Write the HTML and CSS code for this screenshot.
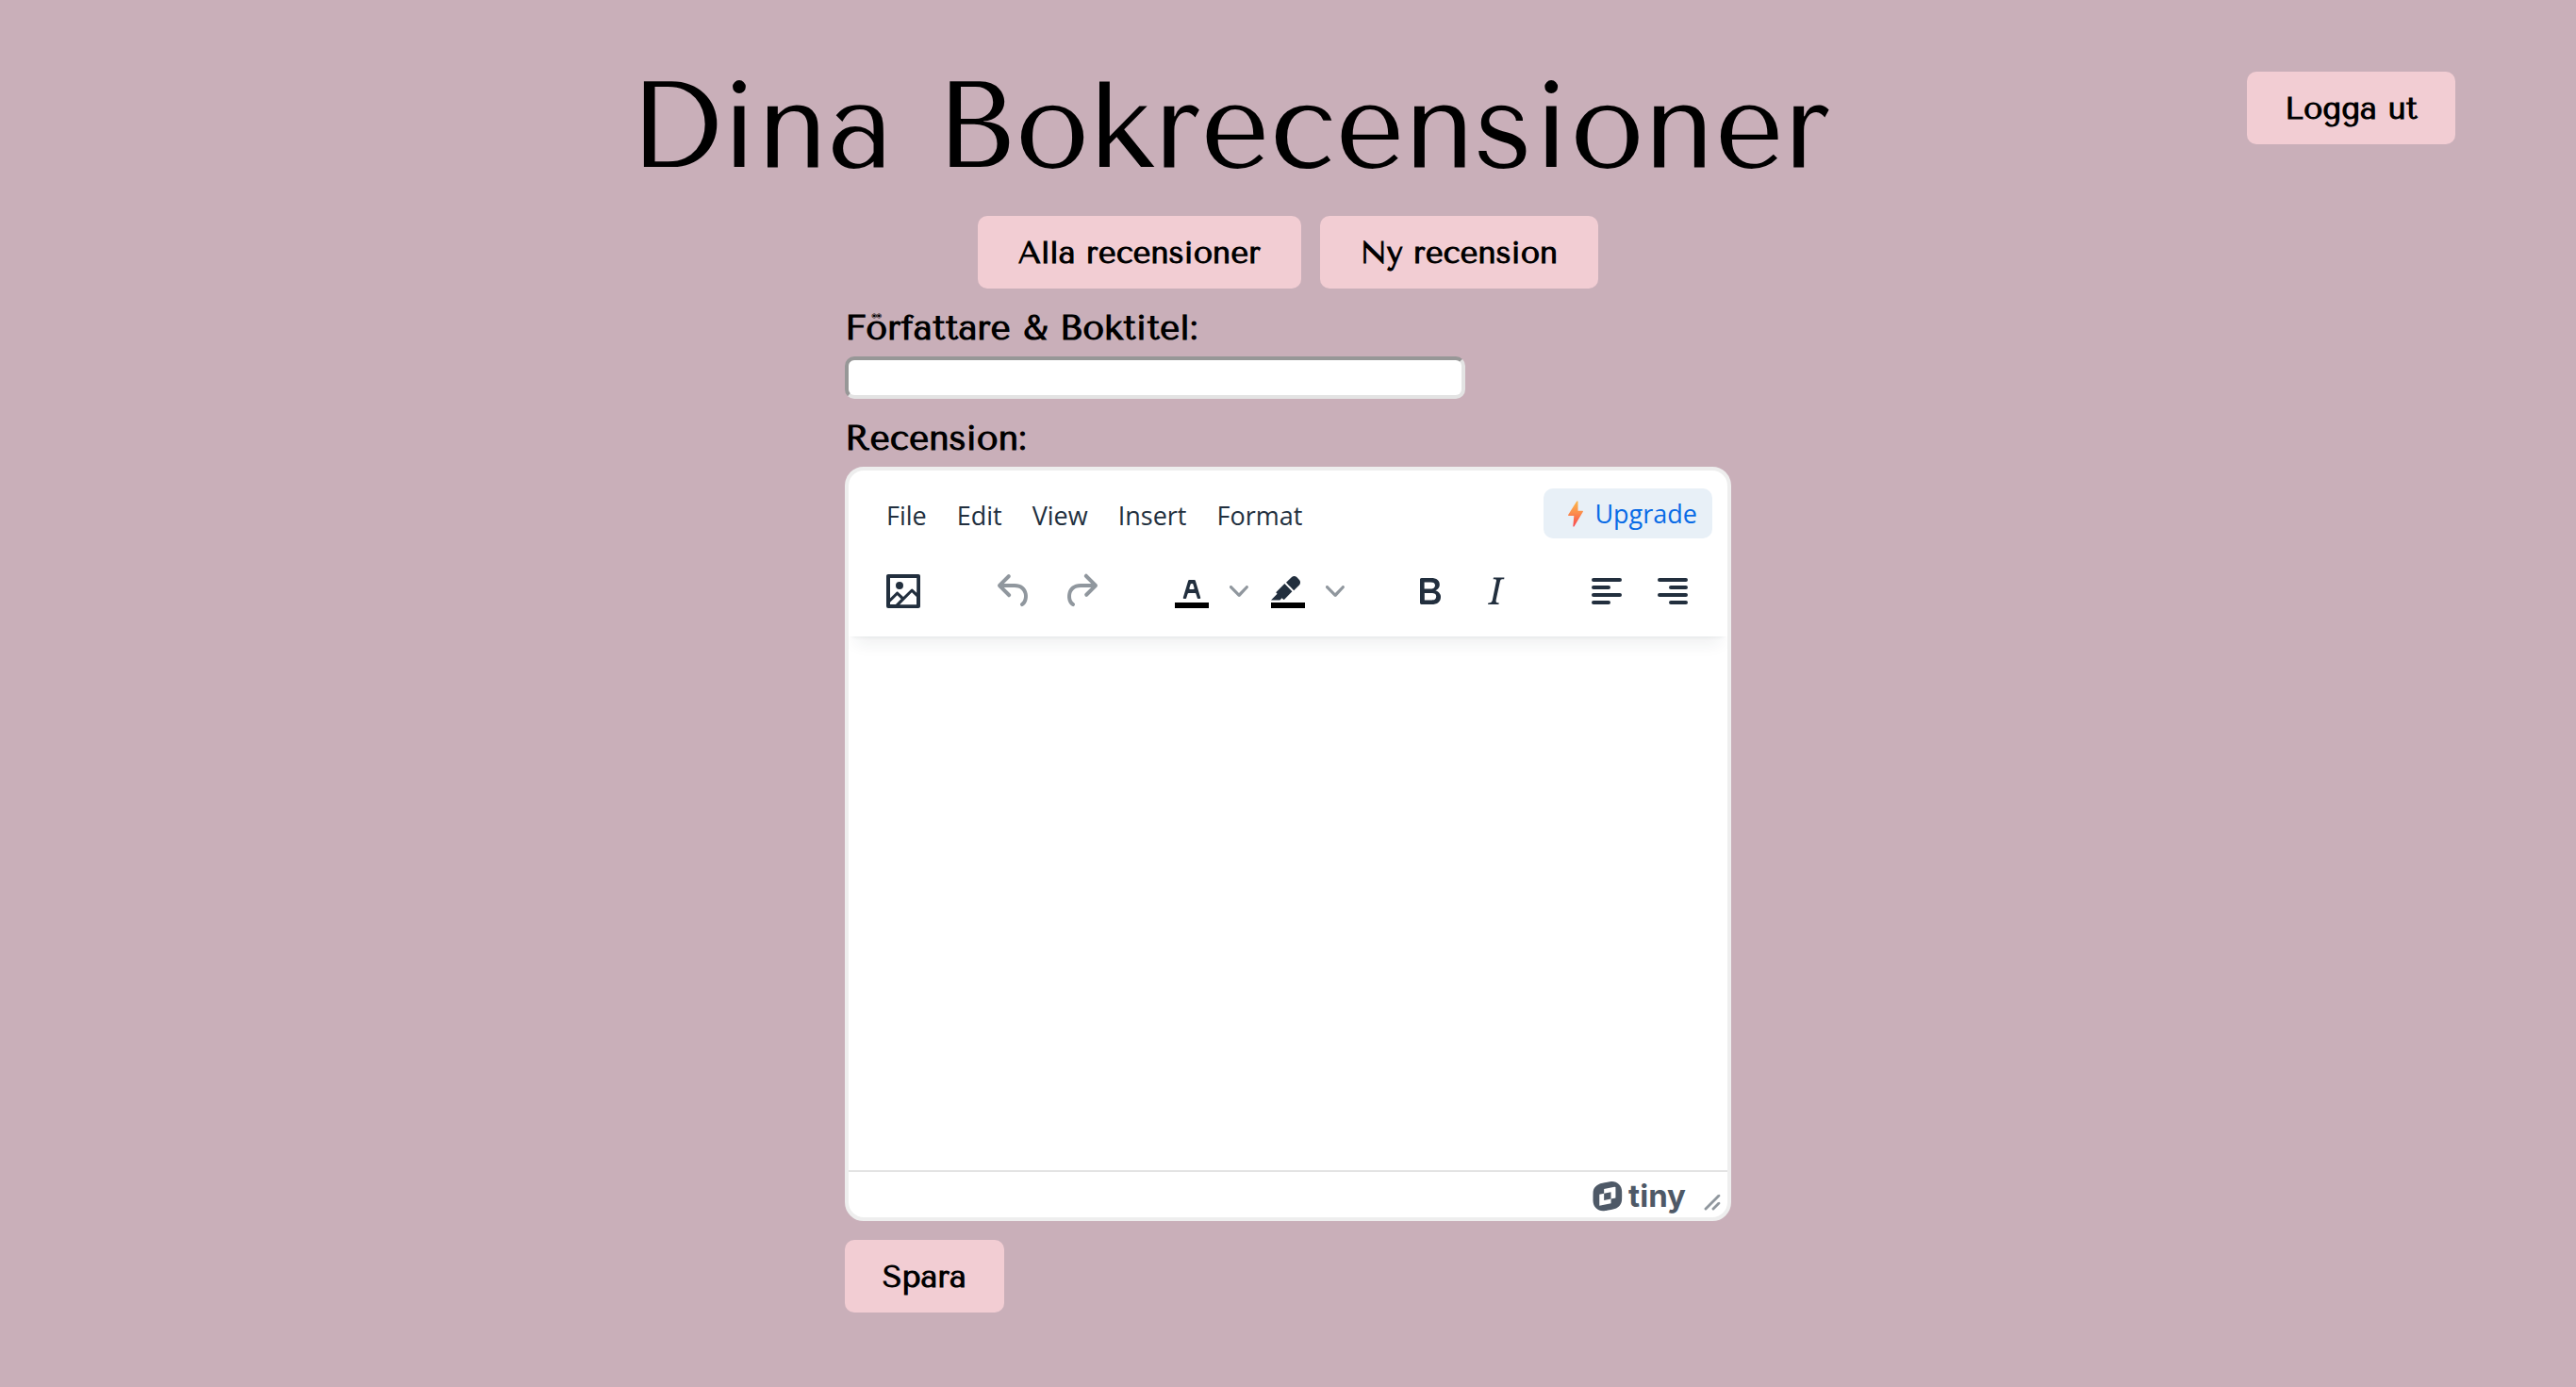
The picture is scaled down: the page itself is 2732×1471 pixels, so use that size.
FILE: index.html
```html
<!DOCTYPE html>
<html lang="sv">
<head>
<meta charset="utf-8">
<meta name="viewport" content="width=device-width, initial-scale=1">
<title>Dina Bokrecensioner</title>
<link rel="stylesheet" href="styles.css">
</head>
<body>
<header class="header">
  <h1 class="title">Dina Bokrecensioner</h1>
  <button class="btn logout" type="button">Logga ut</button>
</header>
<nav class="nav">
  <button class="btn btn-wide" type="button">Alla recensioner</button>
  <button class="btn btn-wide" type="button">Ny recension</button>
</nav>
<main>
<form class="form">
  <label class="label" for="booktitle">Författare &amp; Boktitel:</label>
  <input class="input" id="booktitle" type="text">
  <label class="label" for="review">Recension:</label>
  <div class="editor">
    <div class="editor-header">
      <div class="menubar">
        <button class="menu" type="button">File</button>
        <button class="menu" type="button">Edit</button>
        <button class="menu" type="button">View</button>
        <button class="menu" type="button">Insert</button>
        <button class="menu" type="button">Format</button>
        <a class="upgrade" href="#">
          <svg width="16" height="28" viewBox="0 0 16 28" aria-hidden="true"><defs><linearGradient id="bolt" x1="0" y1="0" x2="0" y2="1"><stop offset="0" stop-color="#fcb648"/><stop offset="0.45" stop-color="#fb8f4c"/><stop offset="1" stop-color="#f9464f"/></linearGradient></defs><path d="M9.300.500H10.500V10.800H15.500L16 11.500L6.400 27.500H5.300L6.300 16H.500L0 15.200Z" fill="url(#bolt)"/></svg>
          Upgrade
        </a>
      </div>
      <div class="toolbar">
        <div class="group">
          <button class="tool" type="button" aria-label="Insert image"><svg class="icon" viewBox="0 0 24 24"><path d="m5 15.700 3.300-3.200c.3-.3.7-.3 1 0L12 15l4.100-4c.3-.4.8-.4 1 0l2 1.900V5H5v10.700ZM5 18V19h3l2.800-2.900-2-2L5 17.900Zm14-3-2.500-2.400-6.400 6.500H19v-4ZM4 3h16c.6 0 1 .4 1 1v16c0 .6-.4 1-1 1H4a1 1 0 0 1-1-1V4c0-.6.4-1 1-1Zm6 8a2 2 0 1 0 0-4 2 2 0 0 0 0 4Z"/></svg></button>
        </div>
        <div class="group">
          <button class="tool muted" type="button" aria-label="Undo"><svg class="icon" viewBox="0 0 24 24"><path d="M6.400 8H12c3.700 0 6.200 2 6.800 5.100.6 2.700-.4 5.600-2.300 6.800a1 1 0 0 1-1-1.800c1.100-.6 1.800-2.700 1.400-4.600-.5-2.100-2.100-3.500-4.900-3.500H6.400l3.300 3.300a1 1 0 1 1-1.400 1.400l-5-5a1 1 0 0 1 0-1.400l5-5a1 1 0 0 1 1.400 1.400L6.400 8Z"/></svg></button>
          <button class="tool muted" type="button" aria-label="Redo"><svg class="icon" viewBox="0 0 24 24"><path d="M17.600 10H12c-2.800 0-4.400 1.400-4.900 3.500-.4 2 .3 4 1.400 4.600a1 1 0 1 1-1 1.800c-2-1.200-2.900-4.100-2.300-6.800.6-3 3-5.100 6.800-5.100h5.600l-3.300-3.300a1 1 0 1 1 1.400-1.400l5 5a1 1 0 0 1 0 1.400l-5 5a1 1 0 0 1-1.400-1.400l3.300-3.300Z"/></svg></button>
        </div>
        <div class="group">
          <button class="tool split" type="button" aria-label="Text color"><svg class="icon" viewBox="0 0 24 24"><path d="M3 18h18v3H3z" fill="#000"/><path d="M8.700 16h-.8a.5.5 0 0 1-.5-.6l2.700-9c.1-.3.3-.4.5-.4h2.800c.2 0 .4.1.5.4l2.700 9a.5.5 0 0 1-.5.6h-.8a.5.5 0 0 1-.4-.4l-.7-2.200c0-.3-.3-.4-.5-.4h-3.400c-.2 0-.4.1-.5.4l-.7 2.200c0 .3-.2.4-.4.4Zm2.600-7.600-.6 2a.5.5 0 0 0 .5.6h1.600a.5.5 0 0 0 .5-.6l-.6-2c0-.3-.3-.4-.5-.4h-.4c-.2 0-.4.1-.5.4Z"/></svg><svg class="chevron" viewBox="0 0 10 10"><path d="M8.700 2.200c.3-.3.8-.3 1 0 .4.4.4.9 0 1.200L5.700 7.800c-.3.3-.9.3-1.200 0L.2 3.400a.8.8 0 0 1 0-1.200c.3-.3.8-.3 1.100 0L5 6l3.700-3.800Z"/></svg></button>
          <button class="tool split" type="button" aria-label="Background color"><svg class="icon" viewBox="0 0 24 24"><path d="M3 18h18v3H3z" fill="#000"/><path d="M7.700 16.700H3l3.300-3.300-.7-.8L10.200 8l4 4.100-4 4.200c-.2.2-.6.2-.8 0l-.6-.7-1.100 1.100zm5-7.500L11 7.400l3-2.900a2 2 0 0 1 2.600 0L18 6c.7.7.7 2 0 2.700l-2.900 2.900-1.800-1.800-.5-.6"/></svg><svg class="chevron" viewBox="0 0 10 10"><path d="M8.700 2.200c.3-.3.8-.3 1 0 .4.4.4.9 0 1.200L5.700 7.800c-.3.3-.9.3-1.200 0L.2 3.400a.8.8 0 0 1 0-1.200c.3-.3.8-.3 1.100 0L5 6l3.700-3.800Z"/></svg></button>
        </div>
        <div class="group">
          <button class="tool" type="button" aria-label="Bold"><svg class="icon" viewBox="0 0 24 24"><path d="M7.800 19c-.3 0-.5 0-.6-.2l-.2-.5V5.700c0-.2 0-.4.2-.5l.6-.2h5c1.500 0 2.700.3 3.500 1 .7.6 1.100 1.400 1.100 2.500a3 3 0 0 1-.6 1.900c-.4.6-1 1-1.600 1.200.4.1.9.3 1.300.6s.8.7 1 1.200c.4.4.5 1 .5 1.600 0 1.300-.4 2.300-1.300 3-.8.7-2.100 1-3.800 1H7.800Zm5-8.300c.6 0 1.200-.1 1.600-.5.4-.3.6-.7.6-1.300 0-1.100-.8-1.700-2.300-1.700H9.300v3.500h3.400Zm.5 6c.7 0 1.300-.1 1.700-.4.4-.4.6-.9.6-1.500s-.2-1-.7-1.400c-.4-.3-1-.4-2-.4H9.400v3.800h4Z" fill-rule="evenodd"/></svg></button>
          <button class="tool" type="button" aria-label="Italic"><svg class="icon" viewBox="0 0 24 24"><path d="m16.700 4.700-.1.900h-.3c-.6 0-1 0-1.400.3-.3.3-.4.6-.5 1.100l-2.100 9.800v.6c0 .5.4.8 1.400.8h.2l-.2.800H8l.2-.8h.2c1.100 0 1.800-.5 2-1.500l2-9.800.1-.5c0-.6-.4-.8-1.400-.8h-.3l.2-.9h5.800Z"/></svg></button>
        </div>
        <div class="group">
          <button class="tool" type="button" aria-label="Align left"><svg class="icon" viewBox="0 0 24 24"><path d="M5 6h14M5 10h8M5 14h14M5 18h8" class="bars"/></svg></button>
          <button class="tool" type="button" aria-label="Align right"><svg class="icon" viewBox="0 0 24 24"><path d="M5 6h14M11 10h8M5 14h14M11 18h8" class="bars"/></svg></button>
        </div>
      </div>
    </div>
    <textarea class="content" id="review"></textarea>
    <div class="statusbar">
      <a class="brand" href="#"><svg class="mark" viewBox="0 0 15.500 16" aria-hidden="true"><path fill-rule="evenodd" d="M10.143 0c2.608.015 5.186 2.178 5.186 5.331 0 0 .077 3.812-.084 4.870-.361 2.410-2.164 4.074-4.650 4.496-1.453.284-2.523.490-3.212.623-.373.071-.634.122-.785.152-.184.038-.997.145-1.350.145-2.732 0-5.210-2.040-5.248-5.330 0 0 0-3.514.030-4.442.093-2.400 1.758-4.342 4.926-4.963 0 0 3.875-.752 4.036-.782.368-.070.775-.100 1.150-.100Zm1.826 2.800L5.830 3.989v2.393l-2.455.475v5.968l6.137-1.189V9.243l2.456-.476V2.800ZM5.830 6.382l3.682-.713v3.574l-3.682.713V6.382Z"/></svg>tiny</a>
      <svg class="resize" viewBox="0 0 10 10" aria-hidden="true"><path d="M8.100 1.100A.5.5 0 1 1 9 2l-7 7A.5.5 0 1 1 1 8l7-7ZM8.100 5.100A.5.5 0 1 1 9 6l-3 3A.5.5 0 1 1 5 8l3-3Z"/></svg>
    </div>
  </div>
  <button class="btn" type="submit">Spara</button>
</form>
</main>
</body>
</html>
```
FILE: styles.css
```css
* { box-sizing: border-box; }

body {
  margin: 0;
  background: #c9afb9;
  color: #000;
  font-family: "Tenor Sans", "Open Sans", sans-serif;
}

button { font: inherit; }

.header {
  display: flex;
  align-items: flex-start;
  padding: 54px 128px 0 224px;
}

.title {
  flex: 1;
  margin: 0;
  font-size: 128px;
  font-weight: 400;
  line-height: 160px;
  text-align: center;
}

.btn {
  height: 77px;
  padding: 0 40px;
  border: 0;
  border-radius: 10px;
  background: #f2cdd3;
  color: #000;
  font-size: 33px;
  font-weight: 700;
  white-space: nowrap;
  cursor: pointer;
}

.btn-wide { padding: 0 43px; }

.logout { margin-top: 22px; }

.nav {
  display: flex;
  justify-content: center;
  gap: 20px;
  margin-top: 15px;
}

.form {
  display: flex;
  flex-direction: column;
  align-items: flex-start;
  width: 100%;
  max-width: 940px;
  margin: 18px auto 0;
  padding-bottom: 64px;
}

.label {
  margin-bottom: 6px;
  font-size: 37px;
  font-weight: 700;
  line-height: 48px;
}

.input {
  width: 70%;
  height: 45px;
  margin-bottom: 18px;
  padding: 0 8px;
  border: 4px solid;
  border-color: #979797 #e3e3e3 #e3e3e3 #979797;
  border-radius: 10px;
  background: #fff;
  font: 26px "Open Sans", sans-serif;
}

.editor {
  display: flex;
  flex-direction: column;
  width: 100%;
  height: 800px;
  margin-bottom: 20px;
  border: 4px solid #eee;
  border-radius: 20px;
  background: #fff;
  color: #222f3e;
  overflow: hidden;
  font-family: "Segoe UI", "Open Sans", sans-serif;
}

.editor-header {
  position: relative;
  padding: 19px 16px 20px 24px;
  box-shadow: 0 4px 4px -4px rgba(34, 47, 62, 0.1), 0 16px 16px -8px rgba(34, 47, 62, 0.07);
}

.menubar {
  display: flex;
  height: 57px;
}

.menu {
  padding: 0 16px;
  border: 0;
  background: none;
  color: inherit;
  font-size: 27px;
}

.upgrade {
  display: flex;
  align-items: center;
  gap: 12px;
  height: 53px;
  margin-left: auto;
  padding: 0 16px 0 26px;
  border-radius: 10px;
  background: #e8f0f7;
  color: #086be6;
  font-size: 27px;
  text-decoration: none;
}

.toolbar {
  display: flex;
  gap: 50px;
  margin-top: 24px;
}

.group {
  display: flex;
  gap: 2px;
}

.tool {
  display: flex;
  align-items: center;
  justify-content: center;
  width: 68px;
  height: 56px;
  padding: 0;
  border: 0;
  background: none;
  fill: #222f3e;
}

.muted { fill: #90979e; }

.split {
  justify-content: flex-start;
  gap: 16px;
  width: 100px;
  padding-left: 10px;
}

.icon {
  width: 48px;
  height: 48px;
}

.chevron {
  width: 20px;
  height: 20px;
  fill: #90979e;
}

.bars {
  stroke: #222f3e;
  stroke-width: 2;
  stroke-linecap: round;
}

.content {
  flex: 1;
  padding: 32px;
  border: 0;
  background: #fff;
  font: 32px "Open Sans", sans-serif;
  resize: none;
}

.statusbar {
  display: flex;
  align-items: center;
  justify-content: flex-end;
  gap: 18px;
  height: 50px;
  padding: 2px 6px 0 0;
  border-top: 2px solid #e3e3e3;
}

.brand {
  display: flex;
  align-items: center;
  gap: 6px;
  color: #4e5967;
  fill: #4e5967;
  font-family: Inter, sans-serif;
  font-size: 33px;
  font-weight: 700;
  line-height: 40px;
  text-decoration: none;
}

.mark {
  width: 32px;
  height: 34px;
  padding-top: 2px;
}

.resize {
  align-self: flex-end;
  width: 20px;
  height: 20px;
  margin-bottom: 6px;
  fill: #90979e;
}
```
